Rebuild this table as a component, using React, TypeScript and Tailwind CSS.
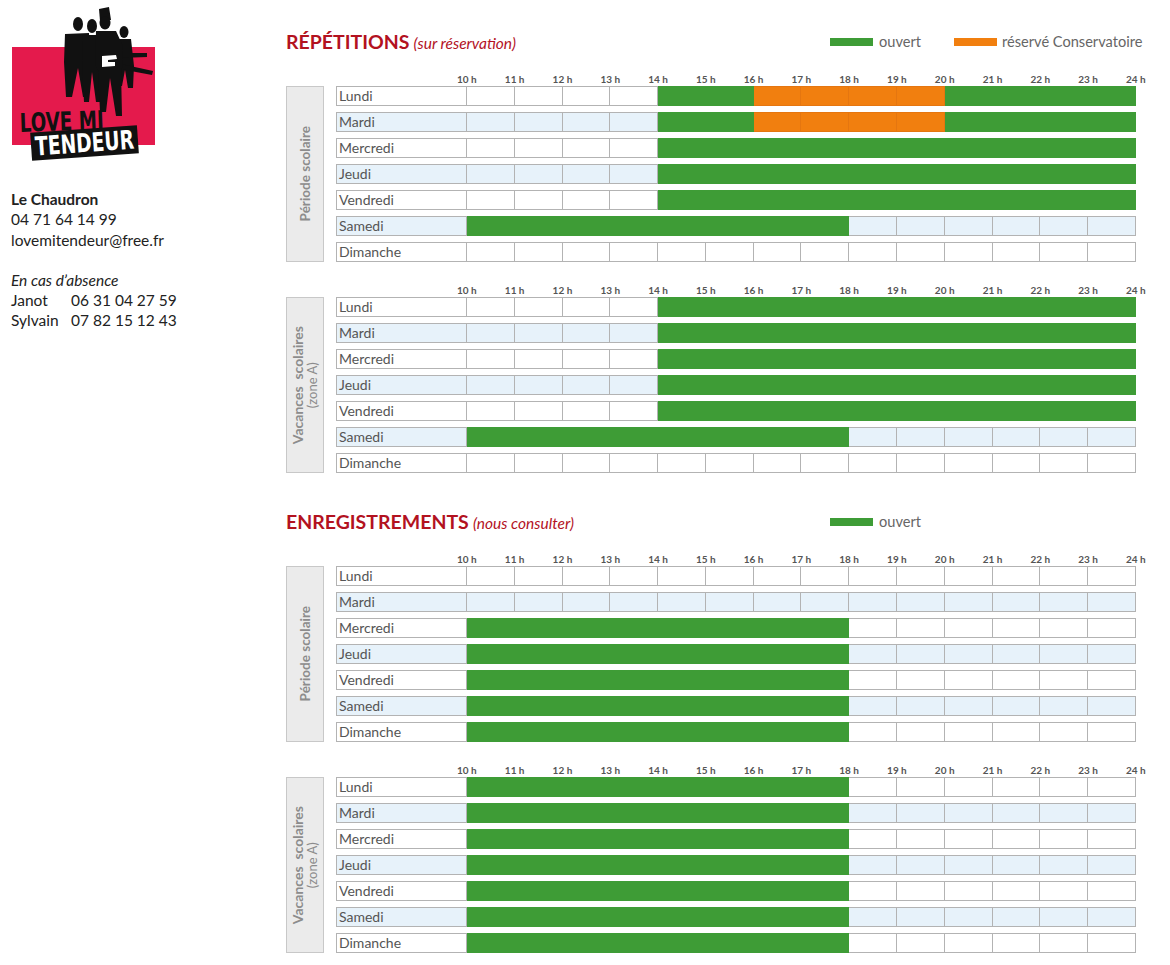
const FONT = { fontFamily: "Lato, 'Open Sans', sans-serif" };

const HOURS = ["10", "11", "12", "13", "14", "15", "16", "17", "18", "19", "20", "21", "22", "23", "24"];
const DAYS = ["Lundi", "Mardi", "Mercredi", "Jeudi", "Vendredi", "Samedi", "Dimanche"];

// one letter per hour slot: . free, g ouvert, o réservé Conservatoire
const BLOCKS = [
  {
    rows: ["....ggoooogggg", "....ggoooogggg", "....gggggggggg", "....gggggggggg", "....gggggggggg", "gggggggg......", ".............."],
    label: "scolaire",
  },
  {
    rows: ["....gggggggggg", "....gggggggggg", "....gggggggggg", "....gggggggggg", "....gggggggggg", "gggggggg......", ".............."],
    label: "vacances",
  },
  {
    rows: ["..............", "..............", "gggggggg......", "gggggggg......", "gggggggg......", "gggggggg......", "gggggggg......"],
    label: "scolaire",
  },
  {
    rows: ["gggggggg......", "gggggggg......", "gggggggg......", "gggggggg......", "gggggggg......", "gggggggg......", "gggggggg......"],
    label: "vacances",
  },
];

const LOGO_FONT = { fontFamily: "'DejaVu Sans Condensed', 'DejaVu Sans', sans-serif", fontWeight: 700 };

const Logo = () => (
  <svg width="170" height="165" viewBox="0 0 170 165">
    <rect x="12" y="47" width="143" height="98" fill="#e41a4c" />
    {/* figure D (back right) */}
    <ellipse cx="124" cy="32" rx="4.5" ry="6" fill="#111" />
    <path d="M117 39 L131 39 L134 66 L133 88 L128 88 L125 70 L122 86 L117 86 L116 62 Z" fill="#111" />
    {/* guitar necks */}
    <path d="M120 53 L147 53 L147 57 L120 58 Z" fill="#111" />
    <path d="M121 64 L153 71 L152 75 L120 69 Z" fill="#111" />
    {/* figure A */}
    <ellipse cx="78" cy="24" rx="5" ry="7" fill="#111" />
    <path d="M65 34 L89 33 L90 62 L88 97 L83 97 L78 68 L72 97 L66 97 L64 62 Z" fill="#111" />
    {/* figure B */}
    <ellipse cx="92" cy="26" rx="5" ry="7" fill="#111" />
    <path d="M83 35 L101 35 L103 66 L101 102 L96 102 L92 72 L89 102 L84 102 L82 66 Z" fill="#111" />
    {/* figure C with hat */}
    <path d="M99 9 L109 7 L111 20 L100 21 Z" fill="#111" />
    <ellipse cx="105" cy="23" rx="5.5" ry="6.5" fill="#111" />
    <path d="M96 31 L116 31 L122 44 L123 66 L121 70 L122 116 L116 116 L110 78 L106 112 L100 112 L98 70 L95 65 Z" fill="#111" />
    {/* white guitar body */}
    <path d="M102 56 L116 55 L117 59 L108 60 L108 62 L115 62 L115 66 L102 67 Z" fill="#fff" />
    <text
      x="20"
      y="132"
      transform="rotate(-2 20 132)"
      fill="#111"
      textLength="84"
      lengthAdjust="spacingAndGlyphs"
      style={{ ...LOGO_FONT, fontSize: 26 }}
    >
      LOVE MI
    </text>
    <g transform="rotate(-4 85 143)">
      <rect x="31" y="129" width="107" height="28" fill="#111" />
      <text
        x="35"
        y="152"
        fill="#fff"
        textLength="99"
        lengthAdjust="spacingAndGlyphs"
        style={{ ...LOGO_FONT, fontSize: 26 }}
      >
        TENDEUR
      </text>
    </g>
  </svg>
);

const cellClass = (c: string, blue: boolean) => {
  if (c === "g") return "bg-[#3e9c36] border-[#3e9c36]";
  if (c === "o") return "bg-[#f17f0f] border-[#e57610]";
  return blue ? "bg-[#e7f2fa] border-[#b3b3b3]" : "bg-white border-[#b3b3b3]";
};

const SideLabel = ({ kind }: { kind: string }) => (
  <div className="w-[38px] h-[176px] bg-[#ebebeb] border border-[#c8c8c8] flex items-center justify-center">
    <div className="[writing-mode:vertical-rl] rotate-180 text-center text-[#8c8c8c] leading-[14px]">
      {kind === "scolaire" ? (
        <span className="text-[13.5px] font-bold">Période scolaire</span>
      ) : (
        <>
          <span className="block text-[14px] font-bold">Vacances&nbsp; scolaires</span>
          <span className="block text-[13px]">(zone A)</span>
        </>
      )}
    </div>
  </div>
);

const Block = ({ rows, label }: { rows: string[]; label: string }) => (
  <div>
    <div className="flex h-[14px] items-center pl-[157px] text-[10px] font-bold text-[#555]">
      {HOURS.map((h) => (
        <div key={h} className="w-[47.79px] shrink-0 text-center">
          {h} h
        </div>
      ))}
    </div>
    <div className="flex gap-[12px]">
      <SideLabel kind={label} />
      <div className="flex w-[800px] flex-col gap-[6px]">
        {rows.map((r, i) => {
          const blue = i % 2 === 1;
          return (
            <div key={i} className="grid h-[20px] grid-cols-[131px_repeat(14,minmax(0,1fr))]">
              <div
                className={`border pl-[2px] text-[14px] leading-[18px] text-[#555] ${
                  blue ? "bg-[#e7f2fa] border-[#b3b3b3]" : "bg-white border-[#b3b3b3]"
                }`}
              >
                {DAYS[i]}
              </div>
              {r.split("").map((c, j) => (
                <div key={j} className={`border-y border-r ${cellClass(c, blue)}`} />
              ))}
            </div>
          );
        })}
      </div>
    </div>
  </div>
);

const Legend = ({ reserved }: { reserved?: boolean }) => (
  <div className="flex items-center text-[14.6px] text-[#666]">
    <span className="h-[8px] w-[43px] bg-[#3e9c36]" />
    <span className="ml-[6px]">ouvert</span>
    {reserved && (
      <>
        <span className="ml-[33px] h-[8px] w-[43px] bg-[#f17f0f]" />
        <span className="ml-[5px]">réservé Conservatoire</span>
      </>
    )}
  </div>
);

const Header = ({ title, sub, reserved }: { title: string; sub: string; reserved?: boolean }) => (
  <div className="flex h-[24px] items-center">
    <div className="w-[544px] text-[#b3121f]">
      <span className="text-[19.5px] font-bold">{title}</span>{" "}
      <span className="text-[15.5px] italic">{sub}</span>
    </div>
    <Legend reserved={reserved} />
  </div>
);

export default function App() {
  return (
    <div className="flex h-[965px] w-[1170px] bg-white text-[#222]" style={FONT}>
      <div className="w-[286px] shrink-0">
        <Logo />
        <div className="pl-[11px] pt-[24px] text-[15.5px] leading-[20.3px]">
          <div className="font-bold">Le Chaudron</div>
          <div>04 71 64 14 99</div>
          <div>lovemitendeur@free.fr</div>
          <div className="mt-[20px] italic">En cas d’absence</div>
          <div className="flex">
            <span className="w-[60px]">Janot</span>
            <span>06 31 04 27 59</span>
          </div>
          <div className="flex">
            <span className="w-[60px]">Sylvain</span>
            <span>07 82 15 12 43</span>
          </div>
        </div>
      </div>
      <div className="pt-[30px]">
        <Header title="RÉPÉTITIONS" sub="(sur réservation)" reserved />
        <div className="mt-[18px]">
          <Block {...BLOCKS[0]} />
        </div>
        <div className="mt-[21px]">
          <Block {...BLOCKS[1]} />
        </div>
        <div className="mt-[37px]">
          <Header title="ENREGISTREMENTS" sub="(nous consulter)" />
        </div>
        <div className="mt-[18px]">
          <Block {...BLOCKS[2]} />
        </div>
        <div className="mt-[21px]">
          <Block {...BLOCKS[3]} />
        </div>
      </div>
    </div>
  );
}
